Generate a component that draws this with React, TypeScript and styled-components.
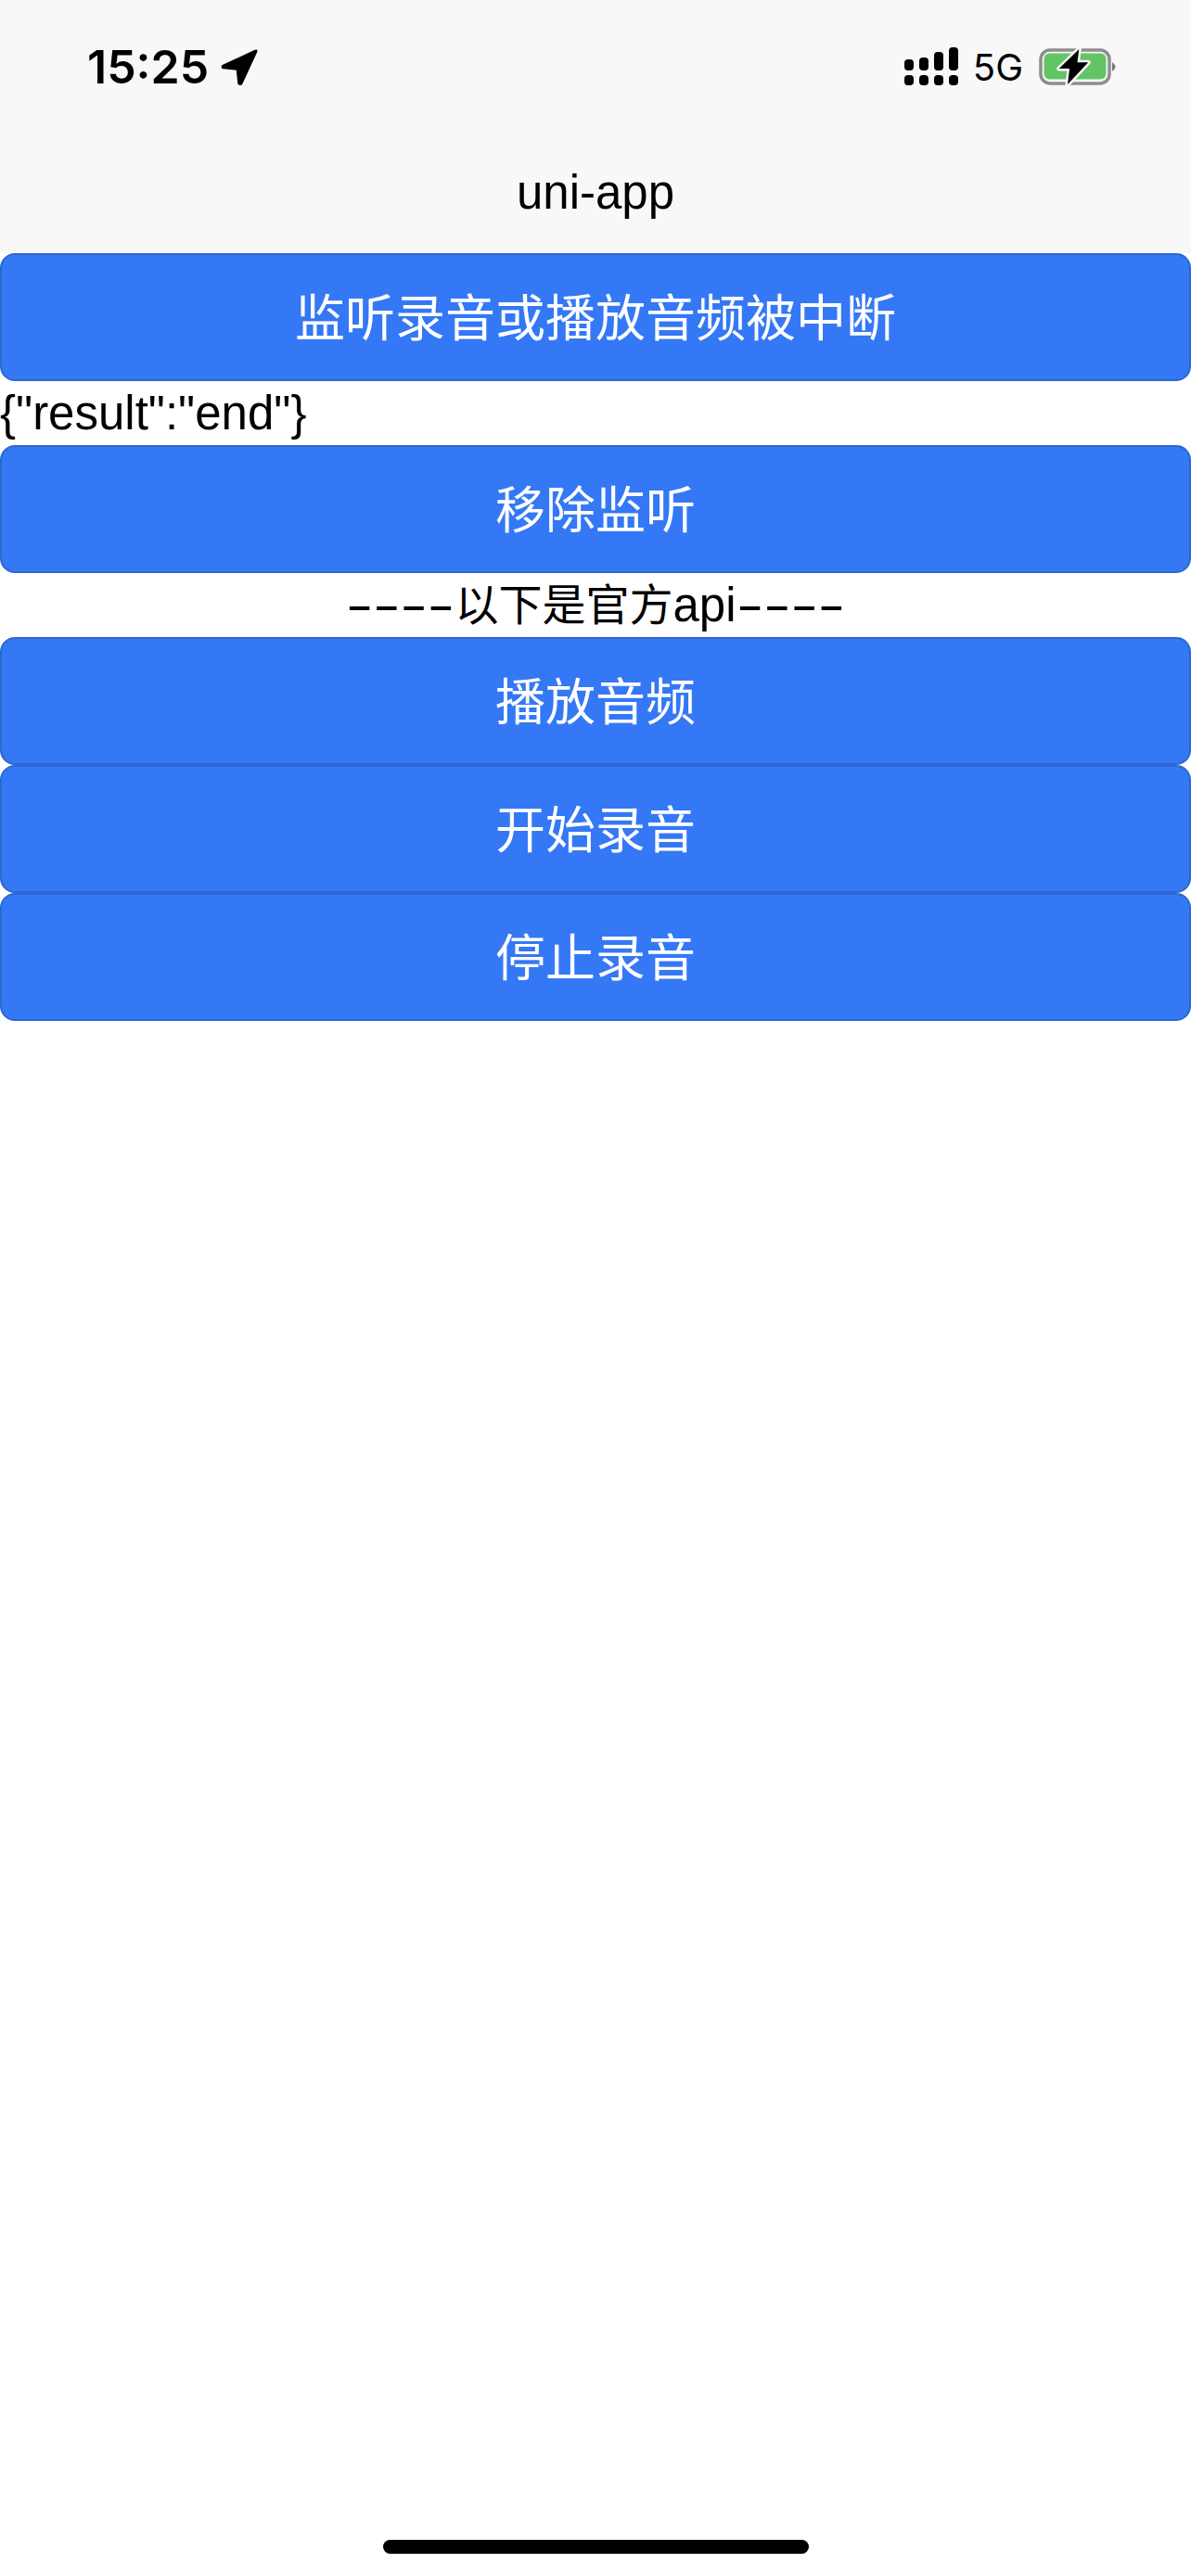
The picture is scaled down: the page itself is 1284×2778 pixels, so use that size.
import styled, { createGlobalStyle } from "styled-components";

const GlobalStyle = createGlobalStyle`
  html, body {
    margin: 0;
    padding: 0;
    background: #ffffff;
  }
  body {
    font-family: "Liberation Sans", "Noto Sans CJK SC", sans-serif;
  }
`;

const buttons = {
  top: "监听录音或播放音频被中断",
  remove: "移除监听",
  api: ["播放音频", "开始录音", "停止录音"],
};

export default function App() {
  return (
    <Page>
      <GlobalStyle />
      <NavHeader>
        <StatusBar>
          <TimeGroup>
            <Time>15:25</Time>
            <svg width="42" height="42" viewBox="0 0 42 42">
              <path
                d="M38 3.5 L3.5 19.5 Q1 21 3.5 22.5 L18.5 24 L20 39 Q22 41.5 23.8 39 L39.5 5 Q40.5 2.5 38 3.5 Z"
                fill="#000"
                stroke="#000"
                strokeWidth="1.5"
                strokeLinejoin="round"
              />
            </svg>
          </TimeGroup>
          <StatusIcons>
            <svg width="60" height="42" viewBox="0 0 60 42">
              <g fill="#000">
                <rect x="0" y="13" width="10" height="12" rx="4" />
                <rect x="16" y="11" width="10" height="14" rx="4" />
                <rect x="32" y="5" width="10" height="20" rx="4" />
                <rect x="48" y="0" width="10" height="25" rx="4" />
                <rect x="0" y="30" width="10" height="11" rx="4" />
                <rect x="16" y="30" width="10" height="11" rx="4" />
                <rect x="32" y="30" width="10" height="11" rx="4" />
                <rect x="48" y="30" width="10" height="11" rx="4" />
              </g>
            </svg>
            <Network>5G</Network>
            <svg width="84" height="44" viewBox="0 0 84 44">
              <rect x="2" y="4" width="74" height="36" rx="10" fill="none" stroke="#8e8e8e" strokeWidth="3.5" />
              <rect x="5.5" y="7.5" width="67" height="28" rx="6" fill="#63c466" />
              <path d="M79 17 L82 20 Q83 22 82 24 L79 27 Z" fill="#777" />
              <path
                d="M43.3 3 L21.7 24 L33 24 L31 41 L53.3 17.3 L41.5 17.3 Z"
                fill="#000"
                stroke="#f8f8f8"
                strokeWidth="5"
                strokeLinejoin="round"
                paintOrder="stroke"
              />
            </svg>
          </StatusIcons>
        </StatusBar>
        <Title>uni-app</Title>
      </NavHeader>
      <ActionButton>{buttons.top}</ActionButton>
      <ResultText>{'{"result":"end"}'}</ResultText>
      <ActionButton>{buttons.remove}</ActionButton>
      <Divider>
        <Dashes>----</Dashes>
        <CjkText>以下是官方</CjkText>api
        <Dashes>----</Dashes>
      </Divider>
      {buttons.api.map((label) => (
        <ActionButton key={label}>{label}</ActionButton>
      ))}
      <HomeIndicator />
    </Page>
  );
}

const Page = styled.div`
  position: relative;
  width: 1284px;
  height: 2778px;
  overflow: hidden;
  background: #ffffff;
  color: #000000;
`;

const NavHeader = styled.header`
  height: 273px;
  background: #f8f8f8;
  display: flex;
  flex-direction: column;
`;

const StatusBar = styled.div`
  height: 144px;
  padding: 0 80px 0 94px;
  display: flex;
  align-items: center;
  justify-content: space-between;
`;

const TimeGroup = styled.div`
  display: flex;
  align-items: center;
  gap: 12px;
`;

const Time = styled.span`
  font-family: Inter, "Liberation Sans", sans-serif;
  font-size: 50px;
  font-weight: 600;
`;

const StatusIcons = styled.div`
  display: flex;
  align-items: center;
  gap: 14px;
`;

const Network = styled.span`
  font-family: Inter, "Liberation Sans", sans-serif;
  font-size: 40px;
  margin-right: 3px;
`;

const Title = styled.div`
  text-align: center;
  font-size: 51px;
  line-height: 60px;
  margin-top: 34px;
`;

const ActionButton = styled.button`
  display: block;
  box-sizing: border-box;
  width: 100%;
  height: 138px;
  margin: 0;
  padding: 0 0 6px;
  border: 2px solid #2c68d0;
  border-radius: 16px;
  background: #3478f6;
  color: #ffffff;
  font-family: "Liberation Sans", "Noto Sans CJK SC", sans-serif;
  font-size: 54px;
`;

const ResultText = styled.div`
  height: 69px;
  font-size: 51px;
  line-height: 69px;
`;

const Divider = styled(ResultText)`
  display: flex;
  justify-content: center;
`;

const CjkText = styled.span`
  font-size: 47px;
`;

// the reference font has a much longer hyphen than Liberation Sans
const Dashes = styled.span`
  width: 117px;
  text-align: left;
  transform: scaleX(1.72);
  transform-origin: left center;
`;

const HomeIndicator = styled.div`
  position: absolute;
  left: 413px;
  top: 2739px;
  width: 459px;
  height: 15px;
  border-radius: 8px;
  background: #000000;
`;
